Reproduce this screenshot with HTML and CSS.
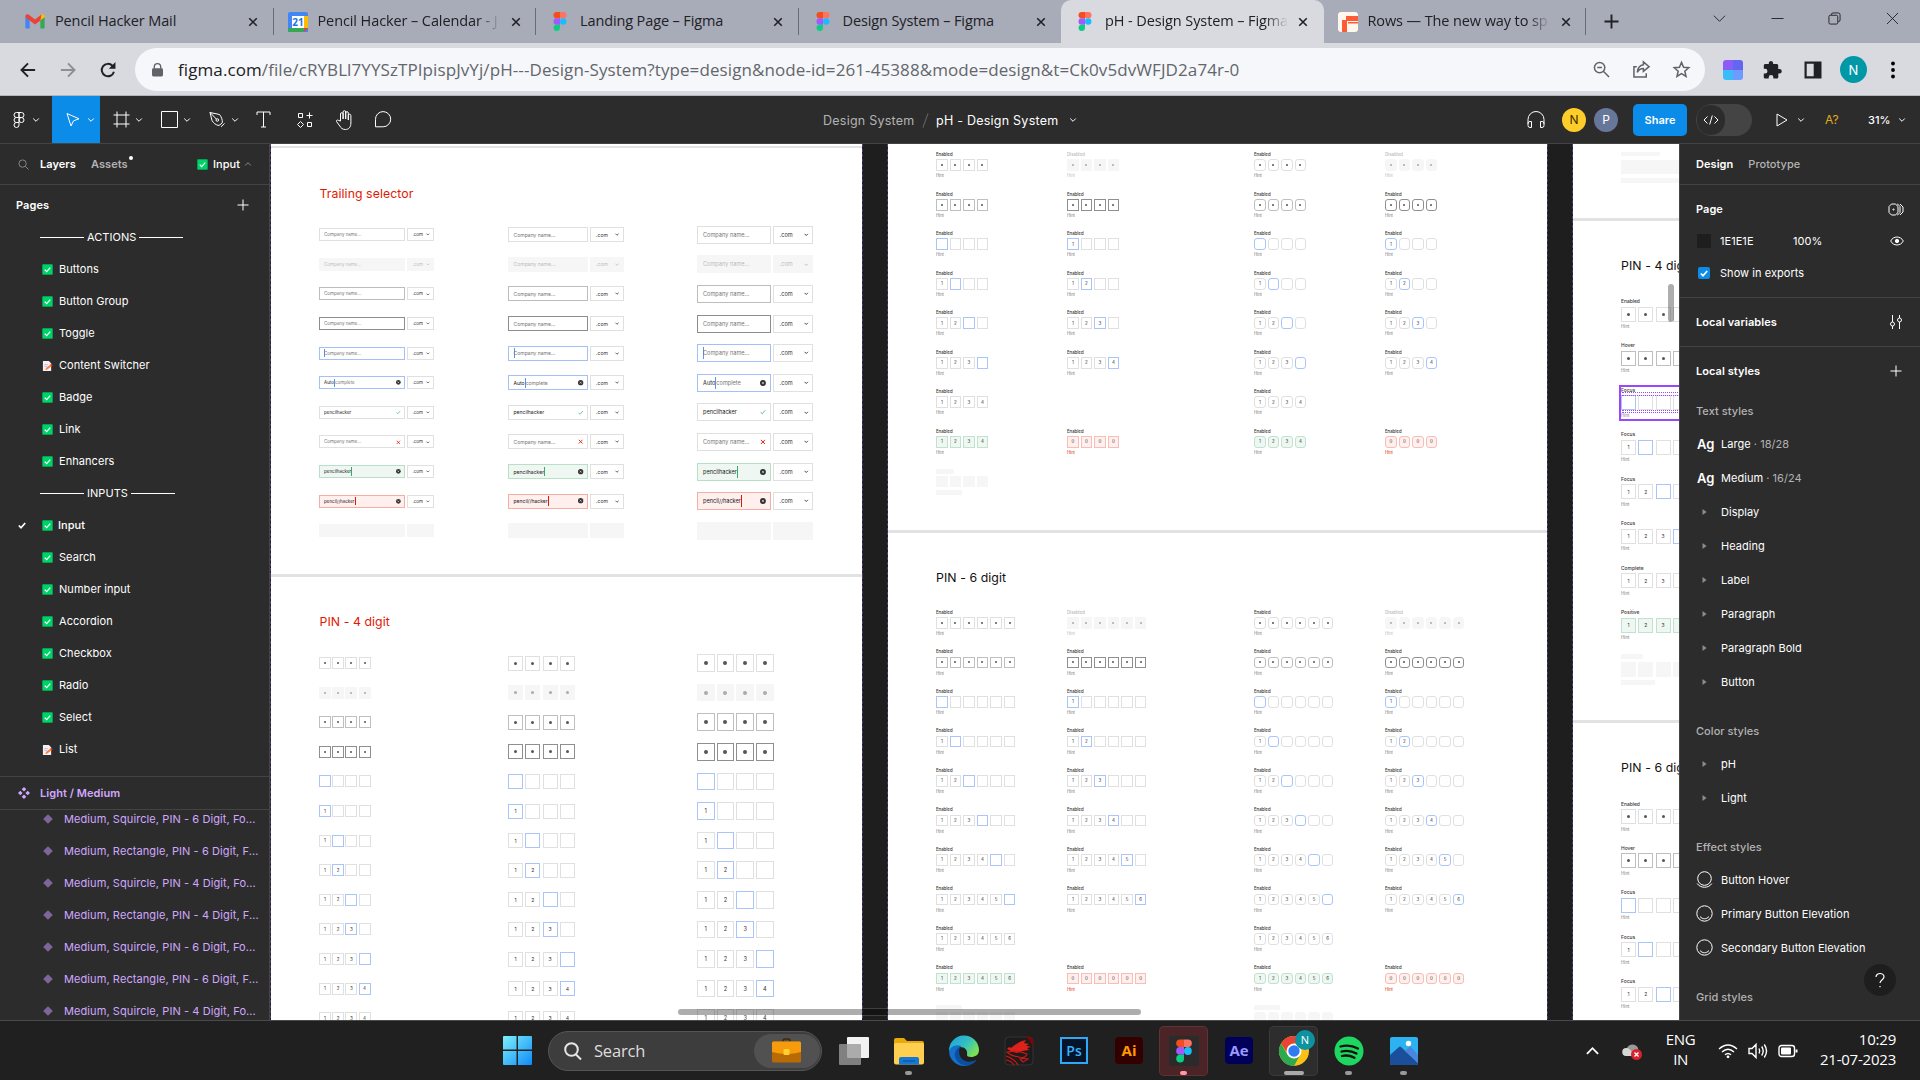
FILE: index.html
```html
<!DOCTYPE html>
<html lang="en">
<head>
<meta charset="utf-8">
<title>pH - Design System – Figma</title>
<link rel="stylesheet" href="styles.css">
</head>
<body>
<svg class="defs" aria-hidden="true">
  <symbol id="x" viewBox="0 0 12 12"><path d="M1.5 1.5l9 9M10.5 1.5l-9 9" stroke="currentColor" stroke-width="1.9" fill="none"/></symbol>
  <symbol id="chev" viewBox="0 0 8 6"><path d="M1.2 1.5L4 4.3l2.8-2.8" stroke="currentColor" fill="none"/></symbol>
  <symbol id="figma" viewBox="0 0 14 20"><path d="M3.5 0H7v6.6H3.5a3.3 3.3 0 010-6.6z" fill="#f24e1e"/><path d="M7 0h3.5a3.3 3.3 0 010 6.6H7z" fill="#ff7262"/><path d="M3.5 6.6H7v6.7H3.5a3.3 3.3 0 010-6.7z" fill="#a259ff"/><circle cx="10.4" cy="10" r="3.4" fill="#1abcfe"/><path d="M3.5 13.3H7v3.3a3.4 3.4 0 11-3.5-3.3z" fill="#0acf83"/></symbol>
  <symbol id="plus" viewBox="0 0 12 12"><path d="M6 .5v11M.5 6h11" stroke="currentColor" fill="none"/></symbol>
  <symbol id="ok" viewBox="0 0 12 12"><rect x=".3" y=".3" width="11.4" height="11.4" rx="1.3" fill="#00d26a" stroke="#0a8f4c" stroke-width=".5"/><path d="M3 6.2l2.1 2.2L9 4" stroke="#fff" stroke-width="1.3" fill="none"/></symbol>
  <symbol id="memo" viewBox="0 0 12 12"><path d="M1 1h6.5L10 3.5V12H1z" fill="#f3eef8"/><path d="M2.5 5h4M2.5 7h3" stroke="#b9a5cc" stroke-width=".7"/><path d="M3.6 10.8l.8-2 4.7-4 1.5 1.8-4.8 3.8z" fill="#ff822d"/><path d="M8.9 5l1.3-1 1.5 1.7-1.2 1z" fill="#f8312f"/></symbol>
  <symbol id="dia" viewBox="0 0 10 10"><path d="M5 .2L9.8 5 5 9.8.2 5z" fill="#7f6699"/></symbol>
  <symbol id="tri" viewBox="0 0 5 6"><path d="M.5 0L4.6 3 .5 6z" fill="#8c8c8c"/></symbol>
</svg>

<header class="tabs">
  <div class="tab"><svg class="fav" viewBox="0 0 18 14"><path d="M0 3v9.5c0 .6.5 1 1 1h3V5z" fill="#4285f4"/><path d="M18 3v9.5c0 .6-.5 1-1 1h-3V5z" fill="#34a853"/><path d="M14 1.500V6l4-3V2c0-1.800-2-2.300-3-1.500z" fill="#fbbc04"/><path d="M0 2C0 .2 2-.3 3 .5l6 4.600L15 .5 14 6 9 9.700 0 3z" fill="#ea4335"/></svg><span class="name s1">Pencil Hacker Mail</span><svg class="close"><use href="#x"/></svg></div>
  <div class="tab"><svg class="fav cal" viewBox="0 0 20 20"><path d="M0 2a2 2 0 012-2h16a2 2 0 012 2v18H0z" fill="#4285f4"/><path d="M16 4h4v12h-4z" fill="#fbbc04"/><path d="M0 16h16v4H2a2 2 0 01-2-2z" fill="#34a853"/><path d="M16 16h4l-4 4z" fill="#ea4335"/><path d="M4 4h12v12H4z" fill="#fff"/><text x="10" y="13.500" font-size="10" font-weight="700" text-anchor="middle" fill="#1a73e8">21</text></svg><span class="name s2">Pencil Hacker – Calendar - J</span><svg class="close"><use href="#x"/></svg></div>
  <div class="tab"><svg class="fav fig"><use href="#figma"/></svg><span class="name s1">Landing Page – Figma</span><svg class="close"><use href="#x"/></svg></div>
  <div class="tab noline"><svg class="fav fig"><use href="#figma"/></svg><span class="name s1">Design System – Figma</span><svg class="close"><use href="#x"/></svg></div>
  <div class="tab active noline"><svg class="fav fig"><use href="#figma"/></svg><span class="name s2">pH - Design System – Figma</span><svg class="close"><use href="#x"/></svg></div>
  <div class="tab"><svg class="fav cal" viewBox="0 0 20 20"><rect width="20" height="20" rx="3" fill="#fff7ee"/><path d="M4 8h5v12H4zM8 4h12v5H8zM10 10h10v1.500H10z" fill="#ff5a36"/></svg><span class="name s2">Rows — The new way to sp</span><svg class="close"><use href="#x"/></svg></div>
  <svg class="newtab" viewBox="0 0 16 16"><path d="M8 .5v15M.5 8h15" stroke="#202124" stroke-width="2"/></svg>
  <div class="win">
    <svg viewBox="0 0 14 14"><path d="M1 4l6 6 6-6" /></svg>
    <svg viewBox="0 0 14 14"><path d="M.5 7h13"/></svg>
    <svg viewBox="0 0 14 14"><rect x="1" y="3.500" width="9.500" height="9.500" rx="1.500"/><path d="M3.500 3.300V3A2 2 0 015.500 1H11a2 2 0 012 2v5.500a2 2 0 01-2 2"/></svg>
    <svg viewBox="0 0 14 14"><path d="M1 1l12 12M13 1L1 13"/></svg>
  </div>
</header>

<div class="nav">
  <svg class="nv" viewBox="0 0 18 18"><path d="M17 9H2M9 1.500L1.700 9 9 16.500" /></svg>
  <svg class="nv dim" viewBox="0 0 18 18"><path d="M1 9h15M9 1.500L16.300 9 9 16.500"/></svg>
  <svg class="nv" viewBox="0 0 18 18"><path d="M15.700 11A7 7 0 1114 4.200L16.500 6.600"/><path d="M17.400 0v7.500h-7.500z" fill="#202124" stroke="none"/></svg>
  <div class="omni">
    <svg class="lock" viewBox="0 0 12 15"><path d="M2.500 6V4a3.500 3.500 0 017 0v2" fill="none" stroke="#5f6368" stroke-width="1.500"/><rect y="5.500" width="12" height="9" rx="1.500" fill="#5f6368"/></svg>
    <span class="url"><b>figma.com</b>/file/cRYBLl7YYSzTPIpispJvYj/pH---Design-System?type=design&amp;node-id=261-45388&amp;mode=design&amp;t=Ck0v5dvWFJD2a74r-0</span>
    <svg class="oi" viewBox="0 0 18 18"><circle cx="7" cy="7" r="5.500"/><path d="M11.200 11.200L17 17M4.500 7h5"/></svg>
    <svg class="oi" viewBox="0 0 18 18"><path d="M4 6H1v11h13v-4"/><path d="M11 1l6 5-6 5V8c-3 0-5 1.500-6.500 4C5 8 7 4.500 11 4z"/></svg>
    <svg class="oi" viewBox="0 0 18 18"><path d="M9 1.500l2.200 5.100 5.500.5-4.200 3.700 1.300 5.500L9 13.400l-4.800 2.900 1.300-5.500L1.300 7.100l5.500-.5z"/></svg>
  </div>
  <svg class="ext" viewBox="0 0 20 20"><defs><clipPath id="r"><rect width="20" height="20" rx="3"/></clipPath></defs><g clip-path="url(#r)"><path fill="#8b5cf6" d="M0 0h10v10H0z"/><path fill="#6366f1" d="M10 0h10v10H10z"/><path fill="#38bdf8" d="M0 10h10v10H0z"/><path fill="#6d9bff" d="M10 10h10v10H10z"/></g></svg>
  <svg class="ext" viewBox="0 0 20 20"><path d="M16.500 9h-1.300V5.500c0-.9-.7-1.600-1.600-1.600h-3.500V2.700a2.200 2.200 0 00-4.300 0v1.200H2.400C1.500 3.900.8 4.600.8 5.500v3.300h1.300a2.300 2.300 0 010 4.700H.8V17c0 .9.700 1.600 1.600 1.600h3.300v-1.200a2.300 2.300 0 014.700 0v1.200h3.300c.9 0 1.600-.7 1.600-1.600v-3.500h1.200a2.200 2.200 0 000-4.500z" fill="#202124"/></svg>
  <svg class="ext" viewBox="0 0 20 20"><path d="M1.500 1.500h17v17h-17z M3.700 3.700v12.600h7V3.700z" fill="#202124" fill-rule="evenodd"/></svg>
  <span class="me">N</span>
  <svg class="dots" viewBox="0 0 4 18"><circle cx="2" cy="2.500" r="1.900"/><circle cx="2" cy="9" r="1.900"/><circle cx="2" cy="15.500" r="1.900"/></svg>
</div>

<div class="bar">
  <div class="tool menu"><svg width="12" height="16" viewBox="0 0 12 16"><path d="M3.500.5H6v5H3.500a2.500 2.500 0 010-5zM6 .5h2.500a2.500 2.500 0 010 5H6zM3.500 5.500H6v5H3.500a2.500 2.500 0 010-5zM3.500 10.500H6V13a2.500 2.500 0 11-2.500-2.500z"/><circle cx="8.500" cy="8" r="2.500"/></svg><svg class="cv"><use href="#chev"/></svg></div>
  <div class="tool on"><svg width="16" height="16" viewBox="0 0 16 16"><path d="M2 1.500l12 5.300-5.500 2L6 14z"/></svg><svg class="cv"><use href="#chev"/></svg></div>
  <div class="tool"><svg width="17" height="17" viewBox="0 0 17 17"><path d="M4 .5v16M13 .5v16M.5 4h16M.5 13h16"/></svg><svg class="cv"><use href="#chev"/></svg></div>
  <div class="tool"><svg width="17" height="17" viewBox="0 0 17 17"><path d="M.5.5h16v16H.5z"/></svg><svg class="cv"><use href="#chev"/></svg></div>
  <div class="tool"><svg width="17" height="17" viewBox="0 0 17 17"><path d="M1 1.500l9.500 2c2 2.500 3 5 2.800 8.300L10 14.500C6.500 14 4.500 12 3 9.500zM1 1.500l6.500 6.700M12 15.800l3.500-3.300"/><circle cx="8.300" cy="9" r="1.300"/></svg><svg class="cv"><use href="#chev"/></svg></div>
  <div class="tool w38"><svg width="15" height="17" viewBox="0 0 15 17"><path d="M1 4V1h13v3M7.500 1v15M5 16h5"/></svg></div>
  <div class="tool w46"><svg width="16" height="16" viewBox="0 0 16 16"><path d="M1.500 1.500h4v4h-4zM10.500 10.500h4v4h-4zM12.500.5v6M9.500 3.500h6M3.500 9.500l3 3-3 3-3-3z"/></svg></div>
  <div class="tool w32"><svg width="19" height="20" viewBox="0 0 19 20"><path d="M5.500 11V4a1.300 1.300 0 012.600 0v5V2a1.300 1.300 0 012.600 0v7V3a1.300 1.300 0 012.600 0v7V5.500a1.300 1.300 0 012.600 0V13c0 4-2 6.500-5.600 6.500-3 0-4.300-1.500-5.500-3.500L1.500 11.500c-.5-1.500 1.200-2 2.200-1z"/></svg></div>
  <div class="tool w46"><svg width="18" height="17" viewBox="0 0 18 17"><path d="M1.500 15.800V8.300a7.600 7.600 0 117.600 7.500z"/></svg></div>
  <div class="crumbs"><span class="c1">Design System</span><i></i><span class="c2">pH - Design System</span><svg class="cv"><use href="#chev"/></svg></div>
  <div class="right">
    <svg class="hp" viewBox="0 0 18 18"><path d="M1 13V8.500a8 8 0 0116 0V13M1 12.500a2 2 0 012-2h1.500v6H3a2 2 0 01-2-2zM17 12.500a2 2 0 00-2-2h-1.500v6H15a2 2 0 002-2z"/></svg>
    <span class="av y">N</span><span class="av p">P</span>
    <span class="share">Share</span>
    <span class="dev"><span><svg width="16" height="10" viewBox="0 0 16 10"><path d="M4.500 1.500L1 5l3.500 3.500M11.500 1.500L15 5l-3.500 3.500M9.300.5L6.700 9.500"/></svg></span></span>
    <svg class="play" viewBox="0 0 12 14"><path d="M1 1l10 6-10 6z"/></svg><svg class="cv"><use href="#chev"/></svg>
    <span class="aq">A?</span><span class="pct">31%</span><svg class="cv"><use href="#chev"/></svg>
  </div>
</div>

<main>
  <aside class="left">
    <div class="ltabs"><svg class="srch" viewBox="0 0 12 12"><circle cx="5" cy="5" r="4"/><path d="M8 8l3.500 3.500"/></svg><b class="lay">Layers</b><b class="ast">Assets</b><i class="dot"></i><span class="pg"><svg class="e"><use href="#ok"/></svg>Input<svg class="cv up"><use href="#chev"/></svg></span></div>
    <div class="pages">
      <div class="phead"><b>Pages</b><svg width="12" height="12"><use href="#plus"/></svg></div>
      <div class="row sep"><i class="l1"></i>ACTIONS<i class="l2"></i></div>
      <div class="row"><svg class="e"><use href="#ok"/></svg>Buttons</div>
      <div class="row"><svg class="e"><use href="#ok"/></svg>Button Group</div>
      <div class="row"><svg class="e"><use href="#ok"/></svg>Toggle</div>
      <div class="row"><svg class="e"><use href="#memo"/></svg>Content Switcher</div>
      <div class="row"><svg class="e"><use href="#ok"/></svg>Badge</div>
      <div class="row"><svg class="e"><use href="#ok"/></svg>Link</div>
      <div class="row"><svg class="e"><use href="#ok"/></svg>Enhancers</div>
      <div class="row sep"><i class="l1"></i>INPUTS<i class="l2"></i></div>
      <div class="row cur"><svg class="tick" viewBox="0 0 8 7"><path d="M.8 3.500L3 5.700 7.200 1"/></svg><svg class="e"><use href="#ok"/></svg>Input</div>
      <div class="row"><svg class="e"><use href="#ok"/></svg>Search</div>
      <div class="row"><svg class="e"><use href="#ok"/></svg>Number input</div>
      <div class="row"><svg class="e"><use href="#ok"/></svg>Accordion</div>
      <div class="row"><svg class="e"><use href="#ok"/></svg>Checkbox</div>
      <div class="row"><svg class="e"><use href="#ok"/></svg>Radio</div>
      <div class="row"><svg class="e"><use href="#ok"/></svg>Select</div>
      <div class="row"><svg class="e"><use href="#memo"/></svg>List</div>
    </div>
    <div class="comp"><svg width="12" height="12" viewBox="0 0 12 12"><path d="M6 0l2.300 2.300L6 4.600 3.700 2.300zM6 7.400l2.300 2.300L6 12 3.700 9.700zM2.300 3.700L4.600 6 2.300 8.300 0 6zM9.700 3.700L12 6 9.700 8.300 7.400 6z" fill="#d1a8ff"/></svg><b>Light / Medium</b></div>
    <div class="layers">
      <div><svg><use href="#dia"/></svg>Medium, Squircle, PIN - 6 Digit, Fo...</div>
      <div><svg><use href="#dia"/></svg>Medium, Rectangle, PIN - 6 Digit, F...</div>
      <div><svg><use href="#dia"/></svg>Medium, Squircle, PIN - 4 Digit, Fo...</div>
      <div><svg><use href="#dia"/></svg>Medium, Rectangle, PIN - 4 Digit, F...</div>
      <div><svg><use href="#dia"/></svg>Medium, Squircle, PIN - 6 Digit, Fo...</div>
      <div><svg><use href="#dia"/></svg>Medium, Rectangle, PIN - 6 Digit, F...</div>
      <div><svg><use href="#dia"/></svg>Medium, Squircle, PIN - 4 Digit, Fo...</div>
    </div>
  </aside>

  <section class="canvas" id="canvas"></section>

  <aside class="insp">
    <div class="itabs"><b>Design</b><b class="g">Prototype</b></div>
    <div class="sec page">
      <div class="line"><b>Page</b><svg width="16" height="13" viewBox="0 0 16 13"><path d="M3.500 1h3.800L10 3.500v6L7.300 12H3.500L1 9.500v-6zM9 1h.500L12 3.500v6L9.500 12H9M12 1l3 3v5l-3 3" /><circle cx="5.500" cy="6.500" r=".6"/></svg></div>
      <div class="line"><i class="sw"></i><span class="hex">1E1E1E</span><span>100%</span><svg width="14" height="10" viewBox="0 0 14 10"><path d="M.7 5c2.500-5.300 10-5.300 12.600 0C10.700 10.300 3.200 10.300.7 5z"/><circle cx="7" cy="5" r="1.700" fill="#fff"/></svg></div>
      <div class="line"><i class="cb"><svg width="8" height="7" viewBox="0 0 8 7"><path d="M.8 3.500L3 5.700 7.200 1" stroke-width="1.700"/></svg></i><span>Show in exports</span></div>
    </div>
    <div class="sec one"><b>Local variables</b><svg width="12" height="14" viewBox="0 0 12 14"><path d="M2.500 0v7M2.500 11v3M9.500 0v3M9.500 7v7"/><circle cx="2.500" cy="9" r="2"/><circle cx="9.500" cy="5" r="2"/></svg></div>
    <div class="sec styles">
      <div class="one"><b>Local styles</b><svg width="12" height="12"><use href="#plus"/></svg></div>
      <h4>Text styles</h4>
      <div class="st"><b class="ag">Ag</b>Large<em>· 18/28</em></div>
      <div class="st"><b class="ag">Ag</b>Medium<em>· 16/24</em></div>
      <div class="st"><svg class="tri"><use href="#tri"/></svg>Display</div>
      <div class="st"><svg class="tri"><use href="#tri"/></svg>Heading</div>
      <div class="st"><svg class="tri"><use href="#tri"/></svg>Label</div>
      <div class="st"><svg class="tri"><use href="#tri"/></svg>Paragraph</div>
      <div class="st"><svg class="tri"><use href="#tri"/></svg>Paragraph Bold</div>
      <div class="st"><svg class="tri"><use href="#tri"/></svg>Button</div>
      <h4>Color styles</h4>
      <div class="st"><svg class="tri"><use href="#tri"/></svg>pH</div>
      <div class="st"><svg class="tri"><use href="#tri"/></svg>Light</div>
      <h4>Effect styles</h4>
      <div class="st"><svg class="fx" viewBox="0 0 17 18"><circle cx="8.500" cy="7.500" r="6.800"/><path d="M1.200 12.500c3 5 11.600 5 14.600 0"/></svg>Button Hover</div>
      <div class="st"><svg class="fx" viewBox="0 0 17 18"><circle cx="8.500" cy="8.500" r="7.700"/><path d="M4 11.500c2.500 3 6.500 3 9 0"/></svg>Primary Button Elevation</div>
      <div class="st"><svg class="fx" viewBox="0 0 17 18"><circle cx="8.500" cy="8.500" r="7.700"/><path d="M4 11.500c2.500 3 6.500 3 9 0"/></svg>Secondary Button Elevation</div>
      <h4>Grid styles</h4>
    </div>
    <span class="help"><svg width="10" height="15" viewBox="0 0 10 15"><path d="M1 4a4 3.500 0 118 0c0 2.500-4 3-4 6"/><path d="M5 13v1.300"/></svg></span>
  </aside>
</main>

<footer class="task">
  <svg class="start" viewBox="0 0 30 30"><defs><linearGradient id="w" x1="0" y1="0" x2="1" y2="1"><stop offset="0" stop-color="#7cf0fc"/><stop offset="1" stop-color="#0f8bf7"/></linearGradient></defs><path d="M0 1q0-1 1-1h13v14H0zM15.500 0H29q1 0 1 1v13H15.500zM0 15.500h14V30H1q-1 0-1-1zM15.500 15.500H30V29q0 1-1 1H15.500z" fill="url(#w)"/></svg>
  <div class="find"><svg width="18" height="18" viewBox="0 0 18 18"><circle cx="7.500" cy="7.500" r="6.300"/><path d="M12 12.500l5 5"/></svg><span>Search</span>
    <div class="brief"><svg width="30" height="24" viewBox="0 0 30 24"><path d="M11 3V1.500Q11 0 12.500 0h4Q18 0 18 1.500V3" stroke="#3a2a10" stroke-width="1.500" fill="none"/><rect y="2.500" width="29" height="21" rx="1.500" fill="#b86a05"/><path d="M0 4q0-1.500 1.500-1.500h26Q29 2.500 29 4v9q-14 4-29 0z" fill="#f59b0c"/><rect x="11.500" y="10" width="6" height="6" rx="1" fill="#ffd02e"/></svg></div>
  </div>
  <div class="apps">
    <div><svg viewBox="0 0 30 30"><rect x="8" y="1" width="22" height="21" rx="1" fill="#f2f2f2"/><rect x="0" y="8" width="22" height="21" rx="1" fill="#999" opacity=".8"/></svg></div>
    <div><svg viewBox="0 0 30 30"><path d="M0 4q0-2 2-2h8l3 3h15q2 0 2 2v8H0z" fill="#e8a90c"/><rect y="7" width="30" height="21.500" rx="2" fill="#ffd04f"/><path d="M5 28.500V23q0-2 2-2h16q2 0 2 2v5.500z" fill="#1478d4"/><path d="M9 25h12" stroke="#0b4f96"/></svg><i></i></div>
    <div><svg viewBox="0 0 30 30"><defs><linearGradient id="eg" x1="0" y1="0" x2="1" y2=".6"><stop offset="0" stop-color="#1c9fe0"/><stop offset=".6" stop-color="#35c1c0"/><stop offset="1" stop-color="#7be352"/></linearGradient></defs><path d="M0 15A15 15 0 0130 14c0 5-4 7-8 7-3 0-4-1-4-2 1-5-2-8-7-8-6 0-10 3-11 4z" fill="url(#eg)"/><path d="M0 15c2-5 8-7 12-5-4 3-5 8-2 12 3 5 10 6 17 2a15 15 0 01-27-9z" fill="#1470cc"/><path d="M12 10c-5 2-8 8-5 13 2 4 6 6 11 7 4-1 8-3 9.500-6-7 3-13 2-16-3-2-4-2-8 .5-11z" fill="#0c4f9e"/></svg></div>
    <div><svg viewBox="0 0 30 30"><rect x="1" y="1" width="28" height="28" rx="4" fill="#1c1c1c" stroke="#333"/><path d="M22 1h4q3 1 3 4v7q-2-7-7-11z" fill="#800"/><path d="M3 13l2-2 2 1c3-2 6-5 11-7l4-1-2 3 5 1-3 1.500 5 1.500-4 1 2 2-7 1-5 2-4-1z" fill="#e0201b"/><path d="M3 16q10-2 20 2-2 5-8 3-8-1-12-5zM2 20q9 3 12 9M2 24q6 1 8 5M16 23q5-1 8 0l-5 3z" stroke="#c81916" fill="none" stroke-width="1.200"/></svg></div>
    <div><svg viewBox="0 0 30 30"><rect x="2" y="2" width="26" height="25" fill="#06142a" stroke="#2fa8f5" stroke-width="2"/><text x="15" y="20" font-size="14" text-anchor="middle" fill="#33b1ff" font-weight="600">Ps</text></svg></div>
    <div><svg viewBox="0 0 30 30"><rect x="1" y="1" width="28" height="27" rx="4" fill="#330000"/><text x="15" y="20" font-size="15" text-anchor="middle" fill="#ff9a00" font-weight="700">Ai</text></svg></div>
    <div class="fg"><svg viewBox="0 0 30 30"><rect width="30" height="30" rx="2" fill="#2b2b2b"/><use href="#figma" x="7" y="3" width="16" height="24"/></svg><i class="r"></i></div>
    <div><svg viewBox="0 0 30 30"><rect x="1" y="1" width="28" height="27" rx="4" fill="#00005b"/><text x="15" y="20" font-size="15" text-anchor="middle" fill="#9999ff" font-weight="700">Ae</text></svg></div>
    <div class="cr"><svg viewBox="0 0 30 30"><circle cx="15" cy="15" r="15" fill="#fbc116"/><path d="M2 7.500A15 15 0 0128 7.500H15L9 18z" fill="#ea4335"/><path d="M2 7.500L8.500 18.700 15 22.500 21 19 15 30A15 15 0 012 7.500z" fill="#2da94f"/><circle cx="15" cy="15" r="7.500" fill="#fff"/><circle cx="15" cy="15" r="5.700" fill="#2e7cf0"/></svg><em>N</em><i class="w"></i></div>
    <div><svg viewBox="0 0 30 30"><circle cx="15" cy="15" r="14.500" fill="#1ed760"/><path d="M6.500 10.500q9-2.500 17.500 2M7.500 15.500q8-2 15 2M8 20q6.500-1.500 12.500 1.700" stroke="#111" stroke-width="2.300" fill="none" stroke-linecap="round"/></svg><i></i></div>
    <div><svg viewBox="0 0 30 30"><rect x="1" y="1" width="28" height="28" rx="2" fill="#2cb2f0"/><path d="M1 19l9-8q1-1 2 0l17 16q0 2-2 2H3q-2 0-2-2z" fill="#1b4f9c"/><path d="M16 15l4-4q1-1 2 0l7 8v8z" fill="#4c86dc"/><circle cx="19.500" cy="7.500" r="2.700" fill="#fff"/></svg><i></i></div>
  </div>
  <div class="tray">
    <svg class="t1" viewBox="0 0 14 8"><path d="M1 7l6-6 6 6"/></svg>
    <svg class="t2" viewBox="0 0 20 18"><path d="M5 14a5 5 0 010-8 6 6 0 0111 0l1 7z" fill="#9a9a9a"/><path d="M4 14a4 4 0 01.500-8q4 0 7.500 8z" fill="#d6d6d6"/><circle cx="14.500" cy="12.500" r="5.500" fill="#d8232f"/><path d="M12.500 10.500l4 4M16.500 10.500l-4 4" stroke="#fff" stroke-width="1.300"/></svg>
    <div class="lang">ENG<br>IN</div>
    <svg class="t3" viewBox="0 0 20 15"><path d="M1 5.500q9-8 18 0M4 8.500q6-5.500 12 0M7 11.300q3-2.800 6 0"/><circle cx="10" cy="13.300" r="1.400" fill="#fff" stroke="none"/></svg>
    <svg class="t3" viewBox="0 0 20 16"><path d="M1 5.500h3l4-4v13l-4-4H1zM11 5.500q1.500 2.500 0 5M13.700 3.500q3 4.500 0 9M16.300 1.500q4.500 6.500 0 13"/></svg>
    <svg class="t3" viewBox="0 0 20 14"><rect x="1" y="1.500" width="15.500" height="11" rx="2.500"/><path d="M18.500 5.500v3" stroke-width="2"/><rect x="3" y="3.500" width="10" height="7" rx="1" fill="#fff" stroke="none"/></svg>
    <div class="clock">10:29<br>21-07-2023</div>
  </div>
</footer>
<script src="app.js"></script>
</body>
</html>
```
FILE: styles.css
```css
* { box-sizing: border-box; }
body { margin: 0; width: 1920px; height: 1080px; overflow: hidden; background: #1e1e1e; font-family: Inter, sans-serif; font-size: 11px; color: #fff; display: flex; flex-direction: column; }
svg { flex: none; overflow: visible; }
i, em { font-style: normal; display: block; flex: none; }
.defs { display: none; }

/* browser tabs */
.tabs { height: 43px; flex: none; background: #a8abb8; display: flex; padding-left: 11px; font-family: "Open Sans", sans-serif; font-size: 14.5px; color: #202124; }
.tab { width: 262.500px; flex: none; display: flex; align-items: center; padding-left: 14px; position: relative; border-right: 1px solid transparent; border-image: linear-gradient(transparent 9px, #696c77 9px, #696c77 34px, transparent 34px) 1; }
.tab.noline { border-image: none; }
.tab.active { background: #d9dae0; border-radius: 10px 10px 0 0; }
.fav { width: 20px; height: 15px; margin-right: 10px; }
.fav.cal { height: 20px; }
.fav.fig { height: 19px; }
.name { width: 184px; height: 24px; line-height: 21px; overflow: hidden; white-space: nowrap; margin-right: 9px; }
.s1 { letter-spacing: -.12px; }
.s2 { letter-spacing: -.1px; -webkit-mask-image: linear-gradient(90deg, #000 160px, transparent 183px); }
.close { width: 10px; height: 10px; }
.newtab { width: 15px; height: 15px; margin: 14px 0 0 18px; }
.win { display: flex; margin-left: 94px; gap: 44.500px; align-items: center; height: 37px; }
.win svg { width: 13px; height: 13px; fill: none; stroke: #202124; }

/* address bar */
.nav { height: 53px; flex: none; background: #d9dae0; border-bottom: 1px solid #b5b6bc; display: flex; align-items: center; padding: 1px 0 0 20px; color: #202124; }
.nv { width: 16px; height: 16px; margin-right: 24px; fill: none; stroke: #202124; stroke-width: 2.200; }
.nv.dim { stroke: #8d8f95; }
.omni { width: 1570px; height: 43px; border-radius: 22px; background: #f6f7fa; margin-left: -5px; display: flex; align-items: center; padding: 0 15px 0 17px; }
.lock { width: 11px; height: 14px; margin-right: 15px; }
.url { flex: 1; font: 17px/24px "Open Sans", sans-serif; color: #63666b; white-space: nowrap; letter-spacing: .09px; }
.url b { font-weight: 400; color: #202124; }
.oi { width: 17px; height: 17px; margin-left: 23px; fill: none; stroke: #5f6368; stroke-width: 1.600; }
.ext { width: 20px; height: 20px; margin-left: 20px; }
.ext:nth-of-type(4) { margin-left: 18px; }
.me { width: 27px; height: 27px; margin-left: 17px; border-radius: 50%; background: #0097a7; color: #fff; font-size: 13px; display: grid; place-items: center; }
.dots { width: 4px; height: 18px; margin-left: 24px; }

/* editor toolbar */
.bar { height: 48px; flex: none; background: #2c2c2c; border-bottom: 1px solid #444; display: flex; align-items: center; position: relative; }
.bar svg, .insp svg { fill: none; stroke: #fff; stroke-width: 1; }
.cv { width: 8px; height: 6px; }
.tool { width: 48px; height: 47px; display: flex; align-items: center; padding-left: 13px; position: relative; }
.tool > .cv { margin-left: 5px; }
.tool.menu { width: 52px; }
.tool.menu .cv { margin-left: 7px; }
.tool.on { background: #0c8ce9; }
.tool.on .cv { margin-left: 6px; }
.tool.w38, .tool.w46, .tool.w32 { width: 38px; padding: 0; justify-content: center; }
.tool.w46 { width: 46px; }
.tool.w32 { width: 32px; }
.crumbs { margin-left: 417px; display: flex; align-items: center; font-size: 12.500px; letter-spacing: .24px; padding-top: 1px; }
.c1 { color: #b3b3b3; width: 93px; white-space: nowrap; }
.crumbs i { width: 1px; height: 15px; background: #666; transform: rotate(20deg); margin: 0 10px 0 9px; }
.c2 { width: 123px; margin-right: 10px; white-space: nowrap; }
.right { margin-left: auto; display: flex; align-items: center; padding-right: 14px; }
.hp { width: 18px; height: 18px; margin-right: 17px; }
.av { width: 24px; height: 24px; border-radius: 50%; display: grid; place-items: center; font-size: 12px; margin-right: 8px; }
.y { background: #ffcd29; color: #3d3000; }
.p { background: #667799; margin-right: 15px; }
.share { width: 54px; height: 32px; border-radius: 5px; background: #0c8ce9; display: grid; place-items: center; font-weight: 600; }
.dev { width: 56px; height: 32px; border-radius: 16px; background: #444; margin: 0 24px 0 9px; padding: 1px; }
.dev span { width: 28px; height: 30px; border-radius: 15px; background: #2c2c2c; display: grid; place-items: center; }
.play { width: 12px; height: 14px; margin-right: 9px; }
.aq { color: #e0ac1e; margin: 0 27px 0 20px; width: 16px; font-size: 12px; }
.pct { width: 26px; margin-right: 4px; font-weight: 500; }

main { flex: none; height: 876px; display: flex; }

/* layers panel */
.left { width: 270px; height: 876px; background: #2c2c2c; border-right: 1px solid #444; overflow: hidden; letter-spacing: .06px; }
.ltabs { height: 41px; border-bottom: 1px solid #444; display: flex; align-items: center; padding-left: 18px; }
b { font-weight: 600; }
.srch { width: 11px; height: 11px; fill: none; stroke: #8c8c8c; }
.lay { margin-left: 11px; width: 51px; }
.ast { color: #b3b3b3; width: 38px; }
.dot { width: 4px; height: 4px; border-radius: 50%; background: #fff; margin-top: -12px; }
.e { width: 11px; height: 11px; margin-right: 6px; }
.pg { margin-left: 64px; display: flex; align-items: center; font-weight: 500; }
.pg .e { margin-right: 5px; }
.up { transform: rotate(180deg); margin-left: 4px; color: #8c8c8c; }
.pages { height: 591px; overflow: hidden; padding-top: 3px; }
.phead { height: 33px; display: flex; align-items: center; justify-content: space-between; padding: 0 20px 0 16px; }
.row { height: 32px; display: flex; align-items: center; padding-left: 42px; }
.row.sep { padding-left: 40px; }
.row.cur { padding-left: 18px; font-weight: 500; }
.l1, .l2 { width: 44px; height: 1px; background: #fff; margin: 0 3px 0 0; }
.l2 { margin: 0 0 0 3px; }
.tick { width: 8px; height: 7px; margin-right: 16px; fill: none; stroke: #fff; stroke-width: 1.700; }
.row.cur .e { margin-right: 5px; }
.comp { height: 34px; border-top: 1px solid #444; border-bottom: 1px solid #444; display: flex; align-items: center; padding-left: 18px; color: #d1a8ff; }
.comp b { margin-left: 10px; }
.layers { color: #d1a8ff; margin-top: -7px; clip-path: inset(7px 0 0 0); letter-spacing: .09px; }
.layers div { height: 32px; display: flex; align-items: center; padding-left: 43px; white-space: nowrap; }
.layers svg { width: 10px; height: 10px; margin-right: 11px; }

/* canvas */
.canvas { width: 1409px; height: 876px; position: relative; overflow: hidden; background: #1e1e1e; }
.frame { position: absolute; background: #fff; outline: 1px dashed #4f3a72; }
.edge { position: absolute; height: 2px; background: #e2e2e2; }
.h { position: absolute; font-size: 12.300px; line-height: 16px; color: #111; white-space: nowrap; letter-spacing: .07px; }
.h.red { color: #e11900; }
.field { position: absolute; display: flex; gap: 2px; color: #333; }
.inp, .sel { border: 1px solid #e0e0e0; display: flex; align-items: center; white-space: nowrap; }
.inp { padding-left: .9em; color: #757575; }
.inp b { font-weight: 400; color: #222; }
.inp u { width: 1px; height: 75%; background: #5b91f5; }
.focus .inp u:first-child { margin-right: -1px; }
.inp svg { margin-left: auto; margin-right: .8em; width: 1.050em; height: 1.050em; }
.sel { padding: 0 .7em 0 1em; justify-content: space-between; }
.sel svg { width: .8em; height: .6em; }
.disabled > *, .skel > * { border-color: #f6f6f6 !important; background: #f6f6f6; color: #bbb; }
.skel > * { color: transparent; }
.skel svg { visibility: hidden; }
.hover .inp { border-color: #bdbdbd; }
.press .inp { border-color: #8d8d8d; }
.focus .inp { border-color: #a3c0f9; }
.good .inp { background: #eef7f1; border-color: #b9dfc8; }
.good .inp u { background: #3aa76d; }
.bad .inp { background: #ffefed; border-color: #f4aea6; }
.bad .inp u { background: #e11900; }
.pin { position: absolute; display: flex; color: #333; }
.pin span { border: 1px solid #e0e0e0; display: grid; place-items: center; flex: none; }
.pin.sq span { border-radius: 3px; }
.pin s { border-radius: 50%; background: #555; }
.pin.disabled s { background: #aaa; }
.pin.hover span { border-color: #bfbfbf; }
.pin.press span { border-color: #8f8f8f; }
.pin .f { border-color: #a9c5fb; }
.pin.good span { background: #eef7f1; border-color: #c0e2cf; }
.pin.bad span { background: #ffefed; border-color: #f7bdb6; }
.lab, .hint { position: absolute; line-height: 6px; white-space: nowrap; color: #333; font-weight: 500; }
.hint { color: #777; font-weight: 400; }
.lab.off, .hint.off { color: #bbb; }
.hint.err { color: #e11900; }
.sk { position: absolute; background: #f6f6f6; }
.picked { position: absolute; border: 2px solid #9747ff; }
.guide { position: absolute; border-top: 1px dotted #9747ff; }
.scroll { position: absolute; border-radius: 4px; background: rgba(0,0,0,.32); box-shadow: 0 0 0 1px rgba(255,255,255,.15); }

/* inspector */
.insp { width: 241px; height: 876px; background: #2c2c2c; border-left: 1px solid #444; position: relative; overflow: hidden; letter-spacing: .05px; }
.itabs { height: 41px; border-bottom: 1px solid #444; display: flex; align-items: center; gap: 15px; padding-left: 16px; }
.g { color: #b3b3b3; font-weight: 500; }
.sec { border-bottom: 1px solid #444; }
.page { height: 113px; padding-top: 8px; }
.line { height: 32px; display: flex; align-items: center; padding: 0 16px; }
.line > svg { margin-left: auto; }
.sw { width: 14px; height: 14px; background: #1e1e1e; margin: 0 9px 0 1px; }
.hex { width: 73px; }
.cb { width: 12px; height: 12px; border-radius: 2px; background: #0c8ce9; display: grid; place-items: center; margin: 0 10px 0 2px; }
.one { height: 49px; display: flex; align-items: center; justify-content: space-between; padding: 0 18px 0 16px; }
.styles { border: 0; }
.styles .one { height: 48px; }
h4 { margin: 0; height: 48px; padding: 24px 0 0 16px; font-size: 11px; line-height: 16px; font-weight: 500; color: #b3b3b3; }
.styles .one + h4 { height: 32px; padding-top: 8px; }
.st { height: 34px; display: flex; align-items: center; padding-left: 16px; }
.st em { color: #b3b3b3; margin-left: 3px; }
.ag { width: 25px; font-size: 13px; padding-left: 1px; }
.insp .tri { width: 5px; height: 6px; margin: 0 14px 0 6px; stroke: none; }
.fx { width: 17px; height: 18px; margin-right: 8px; }
.help { position: absolute; left: 184px; top: 820px; width: 32px; height: 32px; border-radius: 50%; background: #1e1e1e; display: grid; place-items: center; }
.help svg { stroke-width: 1.200; }

/* taskbar */
.task { height: 60px; flex: none; background: #202020; border-top: 1px solid #4a4a4a; display: flex; align-items: center; padding-left: 503px; font-family: "Open Sans", sans-serif; }
.start { width: 29px; height: 29px; }
.find { width: 274px; height: 40px; margin-left: 16px; border-radius: 20px; background: #3d3d3d; border: 1px solid #555; display: flex; align-items: center; padding: 0 1px 0 15px; font-size: 16.500px; color: #ddd; }
.find > svg { fill: none; stroke: #e6e6e6; stroke-width: 2; margin-right: 12px; }
.find span { letter-spacing: -.2px; }
.brief { width: 66px; height: 34px; border-radius: 17px; background: #515151; margin-left: auto; display: grid; place-items: center; }
.apps { display: flex; margin-left: 7px; gap: 6px; }
.apps div { width: 49px; height: 50px; border-radius: 5px; display: grid; place-items: center; position: relative; }
.apps svg { width: 30px; height: 30px; }
.apps i { position: absolute; bottom: 1px; left: 21px; width: 7px; height: 4px; border-radius: 2px; background: #999; }
.apps i.r { background: #ff9aa2; }
.apps i.w { width: 20px; left: 15px; background: #aaa; }
.fg { background: #4a2426; box-shadow: inset 0 0 0 1px #5d3336; }
.cr { background: #2d2d2d; box-shadow: inset 0 0 0 1px #3a3a3a; }
.cr em { position: absolute; left: 26px; top: 4px; width: 20px; height: 20px; border-radius: 50%; background: #0d93a0; display: grid; place-items: center; font-size: 11px; }
.tray { margin-left: auto; padding-right: 24px; display: flex; align-items: center; font-size: 15px; line-height: 20px; }
.tray svg { fill: none; stroke: #fff; stroke-width: 1.400; }
.t1 { width: 13px; height: 8px; margin-right: 23px; }
.t1 path { stroke-width: 2; }
.tray .t2 { width: 20px; height: 18px; stroke: none; margin-right: 23px; }
.lang, .clock { margin-top: -3px; }
.lang { width: 31px; text-align: center; margin-right: 22px; letter-spacing: -.4px; }
.t3 { width: 20px; height: 16px; margin-right: 10px; }
.clock { width: 88px; text-align: right; letter-spacing: -.22px; white-space: nowrap; }
```
FILE: app.js
```js
const canvas = document.getElementById('canvas');
const OX = 270, OY = 144;

function put(cls, x, y, style = '', html = '') {
  const el = document.createElement('div');
  el.className = cls;
  el.style.cssText = `left:${x - OX}px;top:${y - OY}px;${style}`;
  el.innerHTML = html;
  canvas.append(el);
}

/* frames */
put('frame', 271, 140, 'width:591px;height:435px');
put('frame', 271, 577, 'width:591px;height:500px');
put('frame', 888, 140, 'width:659px;height:390px');
put('frame', 888, 533, 'width:659px;height:500px');
put('frame', 1573, 140, 'width:200px;height:78px');
put('frame', 1573, 221, 'width:200px;height:499px');
put('frame', 1573, 723, 'width:200px;height:400px');
[[271, 146, 591], [271, 574, 591], [888, 530, 659], [1573, 218, 120], [1573, 720, 120]]
  .forEach(([x, y, w]) => put('edge', x, y, `width:${w}px;height:${y === 146 ? 2 : 3}px`));

put('h red', 319.5, 186, '', 'Trailing selector');
put('h red', 319.5, 614, '', 'PIN - 4 digit');
put('h', 936, 570, '', 'PIN - 6 digit');
put('h', 1621, 258, '', 'PIN - 4 dig');
put('h', 1621, 760, '', 'PIN - 6 dig');

/* trailing selector fields */
const down = '<svg viewBox="0 0 8 6"><path d="M1 1.500l3 3 3-3" stroke="currentColor" stroke-width="1.600" fill="none"/></svg>';
const clear = '<svg viewBox="0 0 10 10"><circle cx="5" cy="5" r="5" fill="#333"/><path d="M3.300 3.300l3.400 3.400M6.700 3.300L3.300 6.700" stroke="#fff"/></svg>';
const check = '<svg viewBox="0 0 10 10"><path d="M1 5.500L4 8l5-6" stroke="#3aa76d" stroke-width="1.300" fill="none"/></svg>';
const cross = '<svg viewBox="0 0 10 10"><path d="M1.500 1.500l7 7M8.500 1.500l-7 7" stroke="#e11900" stroke-width="1.600" fill="none"/></svg>';
const fields = [
  ['', 'Company name...'], ['disabled', 'Company name...'], ['hover', 'Company name...'],
  ['press', 'Company name...'], ['focus', '<u></u>Company name...'],
  ['focus', '<b>Auto</b><u></u>complete' + clear], ['', '<b>pencilhacker</b>' + check],
  ['', 'Company name...' + cross], ['good', '<b>pencilhacker</b><u></u>' + clear],
  ['bad', '<b>pencil//hacker</b><u></u>' + clear], ['skel', '']
];
const sizes = [
  { x: 319, a: 86, b: 27, h: 13, fs: 4.5, box: 12, pitch: 13.2, dot: 2 },
  { x: 508, a: 80, b: 34, h: 15, fs: 5.05, box: 15, pitch: 17.3, dot: 3 },
  { x: 697, a: 74, b: 40, h: 18, fs: 5.6, box: 17.5, pitch: 19.7, dot: 4 }
];
sizes.forEach(s => fields.forEach(([cls, html], r) => {
  put('field ' + cls, s.x, 234.7 + r * 29.6 - s.h / 2, `height:${s.h}px;font-size:${s.fs}px`,
    `<div class="inp" style="width:${s.a}px">${html}</div><div class="sel" style="width:${s.b}px">.com${down}</div>`);
}));

/* a row of code boxes: chars hold one sign per box, "*" is a masked digit, "_" an empty one */
function pin(x, cy, size, pitch, chars, cls, focus, fs, dot) {
  const cells = [...chars].map((c, i) => {
    const inner = c === '*' ? `<s style="width:${dot}px;height:${dot}px"></s>` : c === '_' ? '' : c;
    return `<span class="${i === focus ? 'f' : ''}" style="width:${size}px;height:${size}px;margin-right:${pitch - size}px">${inner}</span>`;
  }).join('');
  put('pin ' + cls, x, cy - size / 2, `font-size:${fs}px`, cells);
}
const fill = (n, total) => '123456'.slice(0, n).padEnd(total, '_');

const plain = [['****', ''], ['****', 'disabled'], ['****', 'hover'], ['****', 'press'], ['____', '', 0]];
for (let i = 0; i < 4; i++) {
  plain.push([fill(i + 1, 4), '', i]);
  if (i < 3) plain.push([fill(i + 1, 4), '', i + 1]);
}
plain.push(['1234', '']);
sizes.forEach(s => plain.forEach(([chars, cls, f], r) =>
  pin(s.x, 663 + r * 29.6, s.box, s.pitch, chars, cls, f, s.fs, s.dot)));

/* labelled code fields in four columns */
function block(n, top, skeletonCols) {
  const cols = [936, 1067, 1254, 1385];
  const dots = '*'.repeat(n);
  const rows = [[[dots, ''], [dots, 'disabled']], [[dots, 'hover'], [dots, 'press']]];
  for (let i = 0; i < n; i++) rows.push([[fill(i, n), '', i], [fill(i + 1, n), '', i]]);
  rows.push([[fill(n, n), ''], null]);
  rows.push([[fill(n, n), 'good'], ['0'.repeat(n), 'bad']]);
  rows.forEach((pair, r) => cols.forEach((x, c) => {
    const item = pair[c % 2];
    if (!item) return;
    const y = top + r * 39.5, off = item[1] === 'disabled' ? ' off' : '';
    put('lab' + off, x, y - 3, 'font-size:4.300px', off ? 'Disabled' : 'Enabled');
    pin(x, y + 10.2, 11.7, 13.57, item[0], item[1] + (c > 1 ? ' sq' : ''), item[2], 4.4, 2);
    put('hint' + off + (item[1] === 'bad' ? ' err' : ''), x, y + 18.3, 'font-size:4.200px', 'Hint');
  }));
  skeletonCols.forEach(c => {
    const y = top + rows.length * 39.5, x = cols[c];
    put('sk', x, y - 2.5, `width:${n === 4 ? 18 : 26}px;height:5px`);
    pin(x, y + 10.5, 11.7, 13.57, '_'.repeat(n), 'skel' + (c > 1 ? ' sq' : ''), -1, 4, 2);
    put('sk', x, y + 19, 'width:26px;height:5px');
  });
}
block(4, 155, [0]);
block(6, 612.7, [0, 2]);

/* right-hand board */
put('sk', 1621, 152, 'width:39px;height:4px');
put('sk', 1621, 160, 'width:90px;height:14px');
put('sk', 1621, 178, 'width:90px;height:5px');
function column(n, top, names) {
  names.forEach(([name, chars, cls, f], r) => {
    const y = top + r * 44.45;
    put('lab', 1621, y - 3, 'font-size:4.900px', name);
    pin(1621, y + 13, 15, 17.3, chars, cls, f, 4.9, 3);
    put('hint', 1621, y + 23, 'font-size:4.500px', 'Hint');
  });
}
column(4, 301, [['Enabled', '****', ''], ['Hover', '****', 'hover'], ['Focus', '____', '', 0],
  ['Focus', '1___', '', 1], ['Focus', '12__', '', 2], ['Focus', '123_', '', 3],
  ['Complete', '1234', ''], ['Positive', '1234', 'good']]);
put('sk', 1621, 654, 'width:22px;height:5px');
pin(1621, 669.5, 15, 17.3, '____', 'skel', -1, 4, 2);
put('sk', 1621, 680, 'width:34px;height:5px');
column(6, 803.5, [['Enabled', '****', ''], ['Hover', '****', 'hover'], ['Focus', '____', '', 0],
  ['Focus', '1___', '', 1], ['Focus', '12__', '', 2]]);

/* current selection */
put('picked', 1619, 385, 'width:100px;height:36px');
[392, 395, 410, 412].forEach(y => put('guide', 1622, y, 'width:60px'));

put('scroll', 1668, 284, 'width:6px;height:38px');
put('scroll', 678, 1009, 'width:463px;height:6px');
```
